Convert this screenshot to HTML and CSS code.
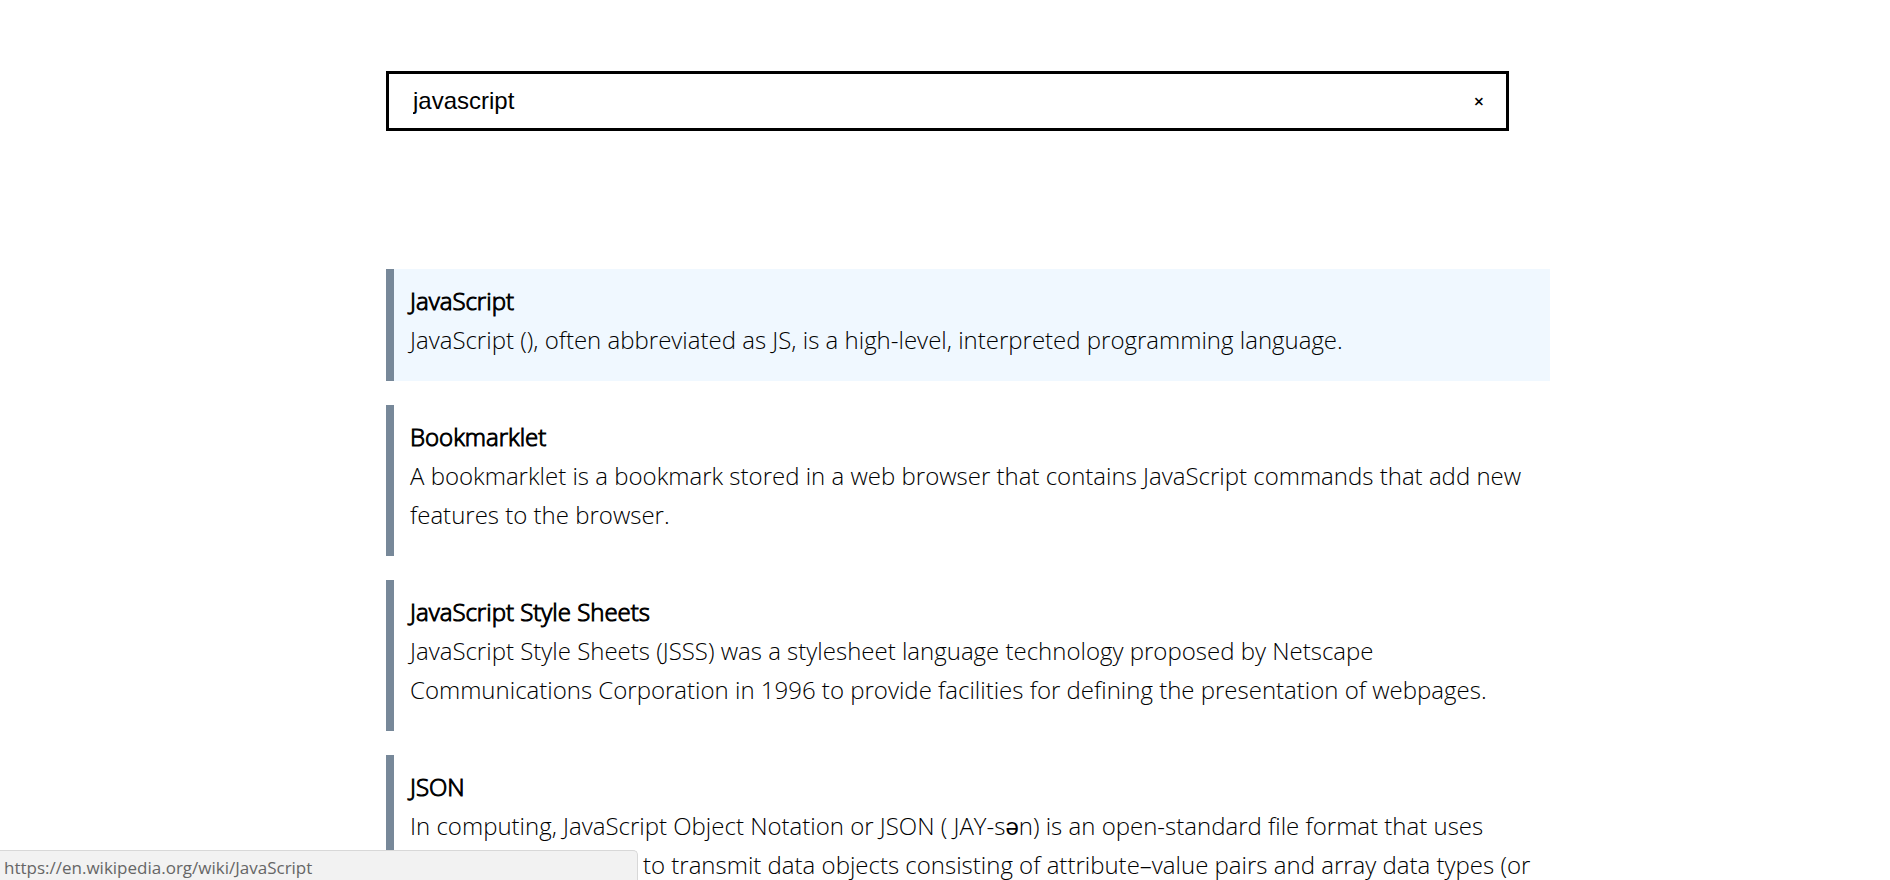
FILE: index.html
```html
<!DOCTYPE html>
<html lang="en">
<head>
<meta charset="utf-8">
<title>Wikipedia search</title>
<link rel="stylesheet" href="styles.css">
</head>
<body>
<main class="page">
  <form class="search">
    <input class="search-input" type="text" aria-label="Search" value="javascript">
    <button class="search-clear" type="button" aria-label="Clear">×</button>
  </form>
  <div class="results">
    <a class="result result-active" href="https://en.wikipedia.org/wiki/JavaScript">
      <h2 class="result-title">JavaScript</h2>
      <p class="result-text">JavaScript (), often abbreviated as JS, is a high-level, interpreted programming language.</p>
    </a>
    <a class="result" href="https://en.wikipedia.org/wiki/Bookmarklet">
      <h2 class="result-title">Bookmarklet</h2>
      <p class="result-text">A bookmarklet is a bookmark stored in a web browser that contains JavaScript commands that add new features to the browser.</p>
    </a>
    <a class="result" href="https://en.wikipedia.org/wiki/JavaScript_Style_Sheets">
      <h2 class="result-title">JavaScript Style Sheets</h2>
      <p class="result-text">JavaScript Style Sheets (JSSS) was a stylesheet language technology proposed by Netscape Communications Corporation in 1996 to provide facilities for defining the presentation of webpages.</p>
    </a>
    <a class="result" href="https://en.wikipedia.org/wiki/JSON">
      <h2 class="result-title">JSON</h2>
      <p class="result-text">In computing, JavaScript Object Notation or JSON ( JAY-s<span class="phonetic">ə</span>n) is an open-standard file format that uses human-readable text to transmit data objects consisting of attribute–value pairs and array data types (or</p>
    </a>
  </div>
</main>
<div class="link-status">https://en.wikipedia.org/wiki/JavaScript</div>
</body>
</html>
```
FILE: styles.css
```css
* {
  box-sizing: border-box;
}

body {
  height: 100vh;
  margin: 0;
  overflow: hidden;
  background: #fff;
  color: #000;
  font: 300 24px/39px "Open Sans", sans-serif;
}

.page {
  max-width: 1118px;
  margin: 0 auto;
  padding-top: 71px;
}

.search {
  display: flex;
  align-items: center;
  height: 60px;
  margin-right: -5px;
  border: 3px solid #000;
}

.search-input {
  flex: 1;
  min-width: 0;
  padding: 0 0 0 24px;
  border: 0;
  outline: 0;
  background: none;
  color: #000;
  font: 24px "Liberation Sans", Arial, sans-serif;
}

.search-clear {
  width: 54px;
  padding: 0;
  border: 0;
  background: none;
  color: #000;
  font: 600 18px "Open Sans", sans-serif;
}

.results {
  display: flex;
  flex-direction: column;
  gap: 24px;
  margin: 138px -46px 0 0;
}

.result {
  padding: 12px 8px 22px 16px;
  border-left: 8px solid #778899;
  color: inherit;
  text-decoration: none;
}

.result-active {
  background: #f0f8ff;
}

.result-title {
  margin: 0;
  font-size: 24px;
  font-weight: 300;
  -webkit-text-stroke: 1px #000;
}

.result-text {
  margin: 0;
}

.phonetic {
  font-family: "Liberation Sans", Arial, sans-serif;
  line-height: 1;
}

.link-status {
  position: fixed;
  bottom: 0;
  left: 0;
  width: 638px;
  height: 30px;
  padding-left: 4px;
  border: 1px solid #d8d8d8;
  border-width: 1px 1px 0 0;
  border-radius: 0 5px 0 0;
  background: #f2f2f2;
  color: #666;
  font: 400 17px/33px "Open Sans", sans-serif;
}
```
